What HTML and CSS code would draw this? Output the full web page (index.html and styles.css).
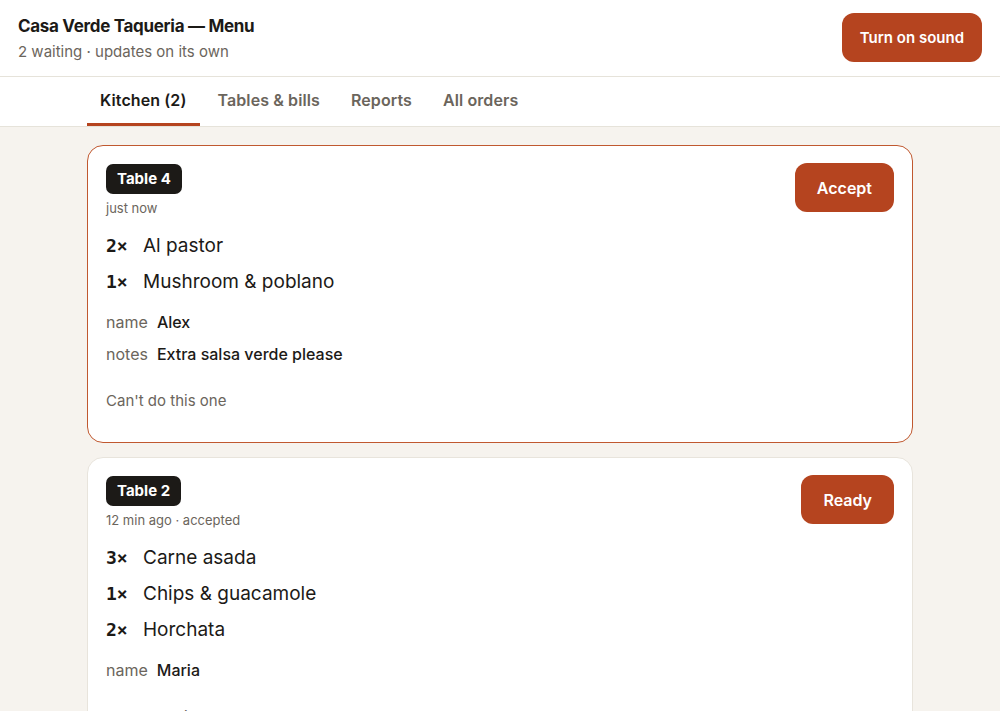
FILE: index.html
```html
<!DOCTYPE html>
<html lang="en">
<head>
<meta charset="utf-8">
<title>Casa Verde Taqueria — Menu</title>
<link rel="stylesheet" href="styles.css">
</head>
<body>
<header class="topbar">
  <div class="brand">
    <h1 class="title">Casa Verde Taqueria — Menu</h1>
    <p class="subtitle">2 waiting · updates on its own</p>
  </div>
  <button class="btn btn-primary">Turn on sound</button>
</header>
<nav class="tabs">
  <div class="tabs-inner">
    <a class="tab tab-active">Kitchen (2)</a>
    <a class="tab">Tables &amp; bills</a>
    <a class="tab">Reports</a>
    <a class="tab">All orders</a>
  </div>
</nav>
<main class="orders">
  <article class="card card-new">
    <div class="card-head">
      <div>
        <span class="badge">Table 4</span>
        <div class="meta">just now</div>
      </div>
      <button class="btn btn-primary btn-action">Accept</button>
    </div>
    <ul class="items">
      <li class="item"><span class="qty">2×</span><span class="dish">Al pastor</span></li>
      <li class="item"><span class="qty">1×</span><span class="dish">Mushroom &amp; poblano</span></li>
    </ul>
    <dl class="details">
      <dt>name</dt><dd>Alex</dd>
      <dt>notes</dt><dd>Extra salsa verde please</dd>
    </dl>
    <button class="btn-link">Can't do this one</button>
  </article>
  <article class="card">
    <div class="card-head">
      <div>
        <span class="badge">Table 2</span>
        <div class="meta">12 min ago · accepted</div>
      </div>
      <button class="btn btn-primary btn-action">Ready</button>
    </div>
    <ul class="items">
      <li class="item"><span class="qty">3×</span><span class="dish">Carne asada</span></li>
      <li class="item"><span class="qty">1×</span><span class="dish">Chips &amp; guacamole</span></li>
      <li class="item"><span class="qty">2×</span><span class="dish">Horchata</span></li>
    </ul>
    <dl class="details">
      <dt>name</dt><dd>Maria</dd>
    </dl>
    <button class="btn-link">Can't do this one</button>
  </article>
</main>
</body>
</html>
```
FILE: styles.css
```css
* { box-sizing: border-box; }
html, body { margin: 0; padding: 0; }
body {
  font-family: Inter, "Noto Sans", sans-serif;
  background: #f6f3ee;
  color: #1c1a17;
}
.topbar {
  display: flex;
  align-items: center;
  justify-content: space-between;
  padding: 13px 18px 14px;
  background: #fff;
  border-bottom: 1px solid #e6e3da;
}
.title {
  margin: 0;
  font-size: 17px;
  line-height: 24px;
  font-weight: 700;
  letter-spacing: -0.3px;
}
.subtitle {
  margin: 4px 0 0;
  font-size: 15px;
  line-height: 20px;
  color: #6b655c;
}
.btn {
  border: none;
  font-family: inherit;
  cursor: pointer;
}
.btn-primary {
  background: #b5441f;
  color: #fff;
  font-size: 15px;
  font-weight: 600;
  height: 49px;
  padding: 0 18px;
  border-radius: 12px;
}
.tabs {
  background: #fff;
  border-bottom: 1px solid #e6e3da;
}
.tabs-inner {
  max-width: 826px;
  margin: 0 auto;
  display: flex;
  gap: 5px;
}
.tab {
  display: block;
  padding: 11px 13px 11px;
  line-height: 24px;
  font-size: 16px;
  font-weight: 600;
  letter-spacing: 0.1px;
  color: #6b655c;
  border-bottom: 3px solid transparent;
}
.tab-active {
  color: #1c1a17;
  border-bottom-color: #b5441f;
}
.orders {
  max-width: 826px;
  margin: 0 auto;
  padding: 18px 0;
  display: flex;
  flex-direction: column;
  gap: 14px;
}
.card {
  background: #fff;
  border: 1px solid #e8e4dc;
  border-radius: 16px;
  padding: 18px;
}
.card-new {
  border-color: #c0582f;
}
.card-head {
  display: flex;
  justify-content: space-between;
  align-items: flex-start;
}
.badge {
  display: inline-block;
  background: #1c1a17;
  color: #fff;
  font-size: 15px;
  font-weight: 700;
  line-height: 30px;
  padding: 0 11px;
  border-radius: 7px;
}
.meta {
  margin-top: 6px;
  font-size: 13px;
  line-height: 16px;
  color: #6b655c;
}
.btn-action {
  margin-top: -1px;
  padding: 0 22px;
  font-size: 16px;
}
.items {
  list-style: none;
  margin: 12px 0 0;
  padding: 0;
}
.item {
  display: flex;
  align-items: center;
  height: 36px;
  font-size: 19px;
}
.qty {
  width: 37px;
  line-height: 36px;
  font-family: "DejaVu Sans Mono", "Liberation Mono", monospace;
  font-weight: 700;
  font-size: 18px;
}
.dish { line-height: 36px; font-weight: 400; }
.details {
  display: grid;
  grid-template-columns: max-content 1fr;
  column-gap: 9px;
  row-gap: 8px;
  margin: 10px 0 0;
  font-size: 16px;
  line-height: 24px;
}
.details dt { color: #6b655c; }
.details dd { margin: 0; font-weight: 500; }
.btn-link {
  display: block;
  margin-top: 12px;
  padding: 12px 0;
  border: none;
  background: none;
  font-family: inherit;
  font-size: 15px;
  line-height: 22px;
  color: #6b655c;
}
```
